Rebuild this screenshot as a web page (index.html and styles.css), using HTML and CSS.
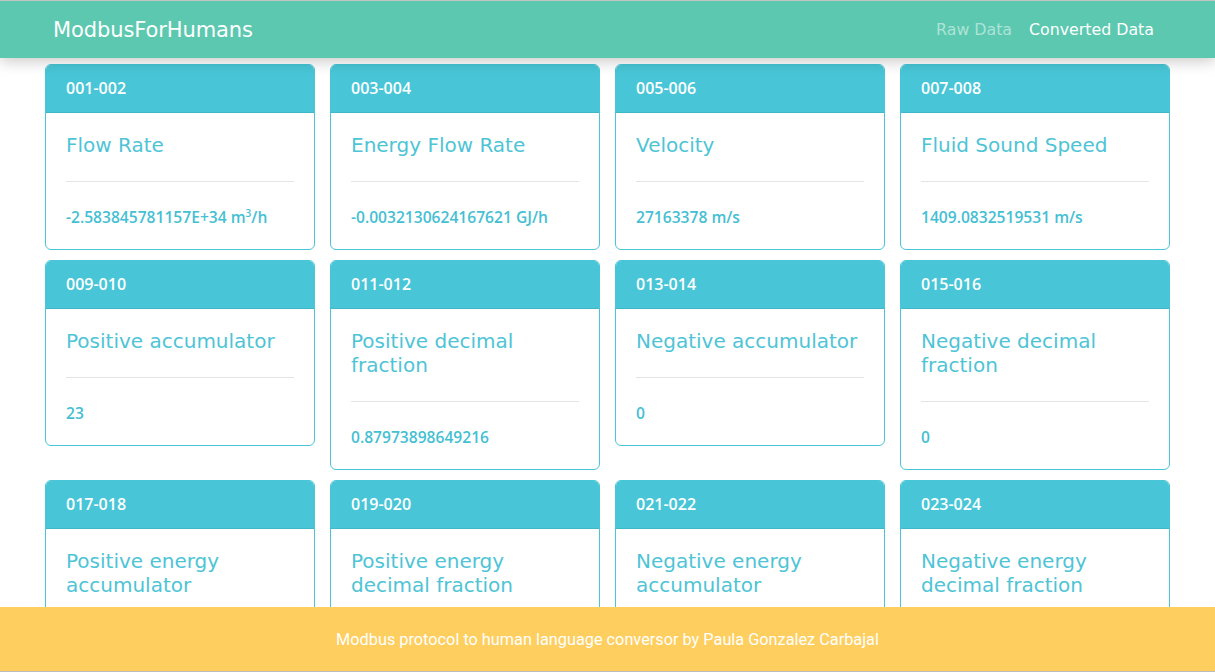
FILE: index.html
```html
<!DOCTYPE html>
<html lang="en">
<head>
<meta charset="utf-8">
<title>ModbusForHumans</title>
<link rel="stylesheet" href="styles.css">
</head>
<body>
<nav class="navbar">
  <a class="brand" href="#">ModbusForHumans</a>
  <div class="nav-links">
    <a class="nav-link muted" href="#">Raw Data</a>
    <a class="nav-link active" href="#">Converted Data</a>
  </div>
</nav>
<main class="grid">
  <div class="card"><div class="card-header">001-002</div><div class="card-body"><h5 class="card-title">Flow Rate</h5><hr><p class="card-value">-2.583845781157E+34 m<sup>3</sup>/h</p></div></div>
  <div class="card"><div class="card-header">003-004</div><div class="card-body"><h5 class="card-title">Energy Flow Rate</h5><hr><p class="card-value">-0.0032130624167621 GJ/h</p></div></div>
  <div class="card"><div class="card-header">005-006</div><div class="card-body"><h5 class="card-title">Velocity</h5><hr><p class="card-value">27163378 m/s</p></div></div>
  <div class="card"><div class="card-header">007-008</div><div class="card-body"><h5 class="card-title">Fluid Sound Speed</h5><hr><p class="card-value">1409.0832519531 m/s</p></div></div>

  <div class="card"><div class="card-header">009-010</div><div class="card-body"><h5 class="card-title">Positive accumulator</h5><hr><p class="card-value">23</p></div></div>
  <div class="card"><div class="card-header">011-012</div><div class="card-body"><h5 class="card-title">Positive decimal fraction</h5><hr><p class="card-value">0.87973898649216</p></div></div>
  <div class="card"><div class="card-header">013-014</div><div class="card-body"><h5 class="card-title">Negative accumulator</h5><hr><p class="card-value">0</p></div></div>
  <div class="card"><div class="card-header">015-016</div><div class="card-body"><h5 class="card-title">Negative decimal fraction</h5><hr><p class="card-value">0</p></div></div>

  <div class="card"><div class="card-header">017-018</div><div class="card-body"><h5 class="card-title">Positive energy accumulator</h5><hr><p class="card-value">0</p></div></div>
  <div class="card"><div class="card-header">019-020</div><div class="card-body"><h5 class="card-title">Positive energy decimal fraction</h5><hr><p class="card-value">0</p></div></div>
  <div class="card"><div class="card-header">021-022</div><div class="card-body"><h5 class="card-title">Negative energy accumulator</h5><hr><p class="card-value">0</p></div></div>
  <div class="card"><div class="card-header">023-024</div><div class="card-body"><h5 class="card-title">Negative energy decimal fraction</h5><hr><p class="card-value">0</p></div></div>
</main>
<footer class="footer">Modbus protocol to human language conversor by Paula Gonzalez Carbajal</footer>
</body>
</html>
```
FILE: styles.css
```css
* { box-sizing: border-box; }

html, body {
  margin: 0;
  padding: 0;
  background: #ffffff;
}

body {
  font-family: "Open Sans", "Liberation Sans", sans-serif;
  padding-bottom: 80px;
}

.navbar {
  position: relative;
  z-index: 10;
  height: 58px;
  background: #5bc8af;
  border-top: 1px solid #c4c4c4;
  box-shadow: 0 3px 14px rgba(0, 0, 0, 0.22);
  display: flex;
  align-items: center;
  justify-content: space-between;
  padding: 0 61px 0 53px;
}

.brand {
  font-family: "DejaVu Sans", sans-serif;
  font-size: 21px;
  color: #ffffff;
  text-decoration: none;
  letter-spacing: -0.1px;
}

.nav-links {
  display: flex;
}

.nav-link {
  font-family: "DejaVu Sans", sans-serif;
  font-size: 15.8px;
  color: #ffffff;
  text-decoration: none;
  padding: 0 8.5px;
}

.nav-link.muted { color: rgba(255, 255, 255, 0.5); }
.nav-link.active { padding-right: 0; }

.grid {
  width: 1125px;
  margin: 6px auto 0;
  display: grid;
  grid-template-columns: repeat(4, 270px);
  column-gap: 15px;
  row-gap: 10px;
  align-items: start;
}

.card {
  border: 1px solid #48c6d7;
  border-radius: 6px;
  overflow: hidden;
  background: #ffffff;
}

.card-header {
  height: 48px;
  background: #48c6d7;
  border-bottom: 1px solid #3fb7c8;
  color: #ffffff;
  font-size: 16px;
  font-weight: 600;
  display: flex;
  align-items: center;
  padding: 0 20px 1px;
}

.card-body {
  padding: 20px 20px 21px;
}

.card-title {
  margin: 0;
  font-family: "DejaVu Sans", sans-serif;
  font-weight: normal;
  font-size: 20px;
  line-height: 24px;
  color: #4ec4d6;
}

.card-body hr {
  margin: 24px 0 24px;
  border: 0;
  border-top: 1px solid #e4e4e4;
  height: 0;
}

.card-value {
  margin: 0;
  font-size: 15.6px;
  font-weight: 550;
  line-height: 22px;
  color: #45bfd3;
}

.card-value sup {
  font-size: 10px;
  line-height: 0;
}

.footer {
  position: fixed;
  left: 0;
  right: 0;
  bottom: 0;
  z-index: 20;
  height: 65px;
  background: #fece5e;
  border-bottom: 1px solid #bdbdbd;
  color: #ffffff;
  font-family: Roboto, "Liberation Sans", sans-serif;
  font-size: 16.3px;
  display: flex;
  align-items: center;
  justify-content: center;
}
```
